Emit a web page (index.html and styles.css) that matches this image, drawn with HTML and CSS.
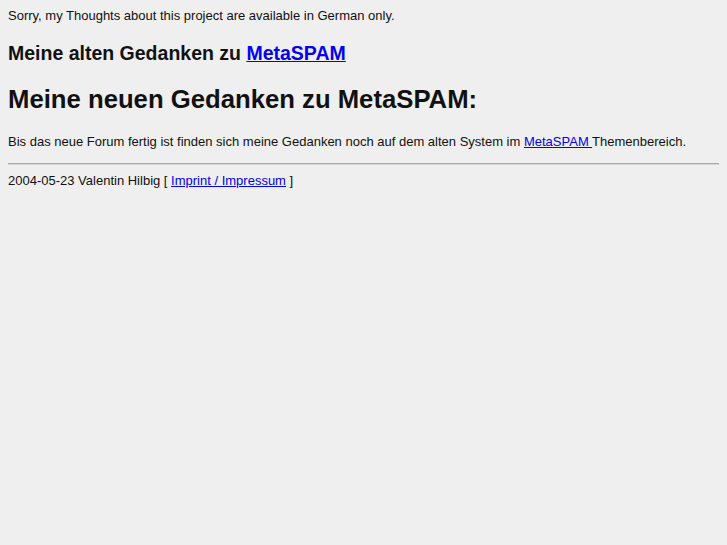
FILE: index.html
```html
<!DOCTYPE html>
<html lang="de">
<head>
  <meta charset="UTF-8" />
  <title>MetaSPAM - Gedanken</title>
  <link rel="stylesheet" href="styles.css">
</head>
<body>

<div class="note">Sorry, my Thoughts about this project are available in German only.</div>

<h2>Meine alten Gedanken zu <a href="#">MetaSPAM</a></h2>

<h1>Meine neuen Gedanken zu MetaSPAM:</h1>

<p>Bis das neue Forum fertig ist finden sich meine Gedanken noch auf dem alten System im <a href="#">MetaSPAM </a>Themenbereich.</p>

<hr>

<div class="footer">2004-05-23 Valentin Hilbig [ <a href="#">Imprint / Impressum</a> ]</div>

</body>
</html>
```

FILE: styles.css
```css
body {
  margin: 8px;
  background: #efefef;
  color: #111;
  font-family: "Liberation Sans", Arial, sans-serif;
  font-size: 13px;
  line-height: 1.28;
}

a {
  color: #0000ee;
}

h2 {
  font-size: 19.5px;
  margin: 16px 0;
}

h1 {
  font-size: 25.7px;
  margin: 17px 0 19px;
}

p {
  margin: 0 0 12px;
}

hr {
  border: 0;
  border-top: 1px solid #a8a8a8;
  border-bottom: 1px solid #d8d8d8;
  margin: 0 0 7px;
}

.footer {
  padding-top: 1px;
}
```
